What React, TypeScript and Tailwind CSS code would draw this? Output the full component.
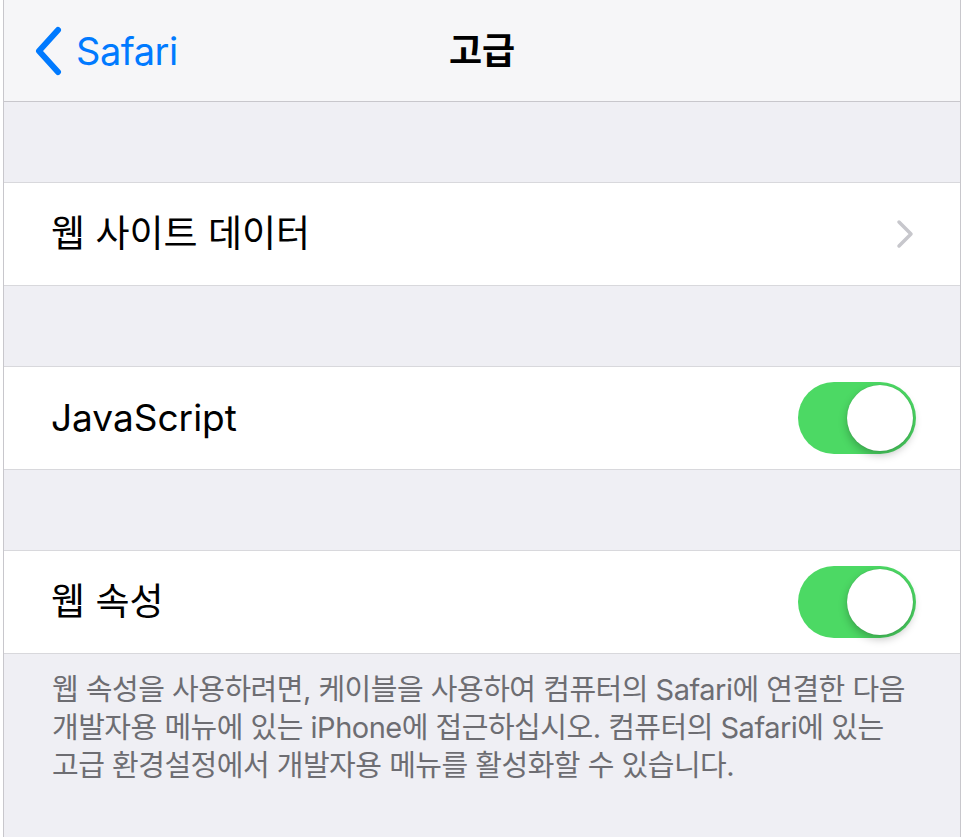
import React from "react";

const font = { fontFamily: '"Inter", "Noto Sans CJK KR", sans-serif' };

function Toggle() {
  return (
    <div className="relative w-[118px] h-[72px] rounded-full bg-[#4cd964]">
      <div className="absolute right-[3px] top-[3px] w-[66px] h-[66px] rounded-full bg-white shadow-[0_4px_8px_rgba(0,0,0,0.25),0_0_1px_rgba(0,0,0,0.2)]" />
    </div>
  );
}

function Gap() {
  return <div className="h-[81px] bg-[#efeff4] border-b border-[#d8d8dc]" />;
}

export default function App() {
  return (
    <div className="w-[966px] h-[837px] bg-white flex" style={font}>
      <div className="ml-[3px] w-[958px] h-full border-l border-r border-[#c8c7cc] flex flex-col bg-[#efeff4]">
        <div className="h-[102px] bg-[#f6f6f8] border-b border-[#c8c7cc] relative flex items-center justify-center">
          <div className="absolute left-[29px] top-0 h-full flex items-center gap-[13px] text-[#007aff]">
            <svg width="30" height="50" viewBox="0 0 30 50">
              <path d="M25 4 L6 25 L25 46" fill="none" stroke="#007aff" strokeWidth="6" strokeLinecap="round" strokeLinejoin="round" />
            </svg>
            <span className="text-[38px] leading-none tracking-[-0.5px]">Safari</span>
          </div>
          <span className="text-[36px] font-semibold text-black leading-none">고급</span>
        </div>
        <Gap />
        <div className="h-[103px] bg-white flex items-center justify-between pl-[47px] pr-[46px] border-b border-[#d8d8dc]">
          <span className="text-[37px] text-black">웹 사이트 데이터</span>
          <svg width="18" height="30" viewBox="0 0 18 30">
            <path d="M3 3 L15 15 L3 27" fill="none" stroke="#c7c7cc" strokeWidth="3.5" strokeLinecap="round" strokeLinejoin="round" />
          </svg>
        </div>
        <Gap />
        <div className="h-[103px] bg-white flex items-center justify-between pl-[47px] pr-[44px] border-b border-[#d8d8dc]">
          <span className="text-[37px] text-black">JavaScript</span>
          <Toggle />
        </div>
        <Gap />
        <div className="h-[103px] bg-white flex items-center justify-between pl-[47px] pr-[44px] border-b border-[#d8d8dc]">
          <span className="text-[37px] text-black">웹 속성</span>
          <Toggle />
        </div>
        <div className="flex-1 bg-[#efeff4] pl-[48px] pr-[20px] pt-[17px] text-[29px] leading-[38px] text-[#6d6d72] tracking-[-0.5px] whitespace-nowrap">
          웹 속성을 사용하려면, 케이블을 사용하여 컴퓨터의 Safari에 연결한 다음
          <br />
          개발자용 메뉴에 있는 iPhone에 접근하십시오. 컴퓨터의 Safari에 있는
          <br />
          고급 환경설정에서 개발자용 메뉴를 활성화할 수 있습니다.
        </div>
      </div>
    </div>
  );
}
